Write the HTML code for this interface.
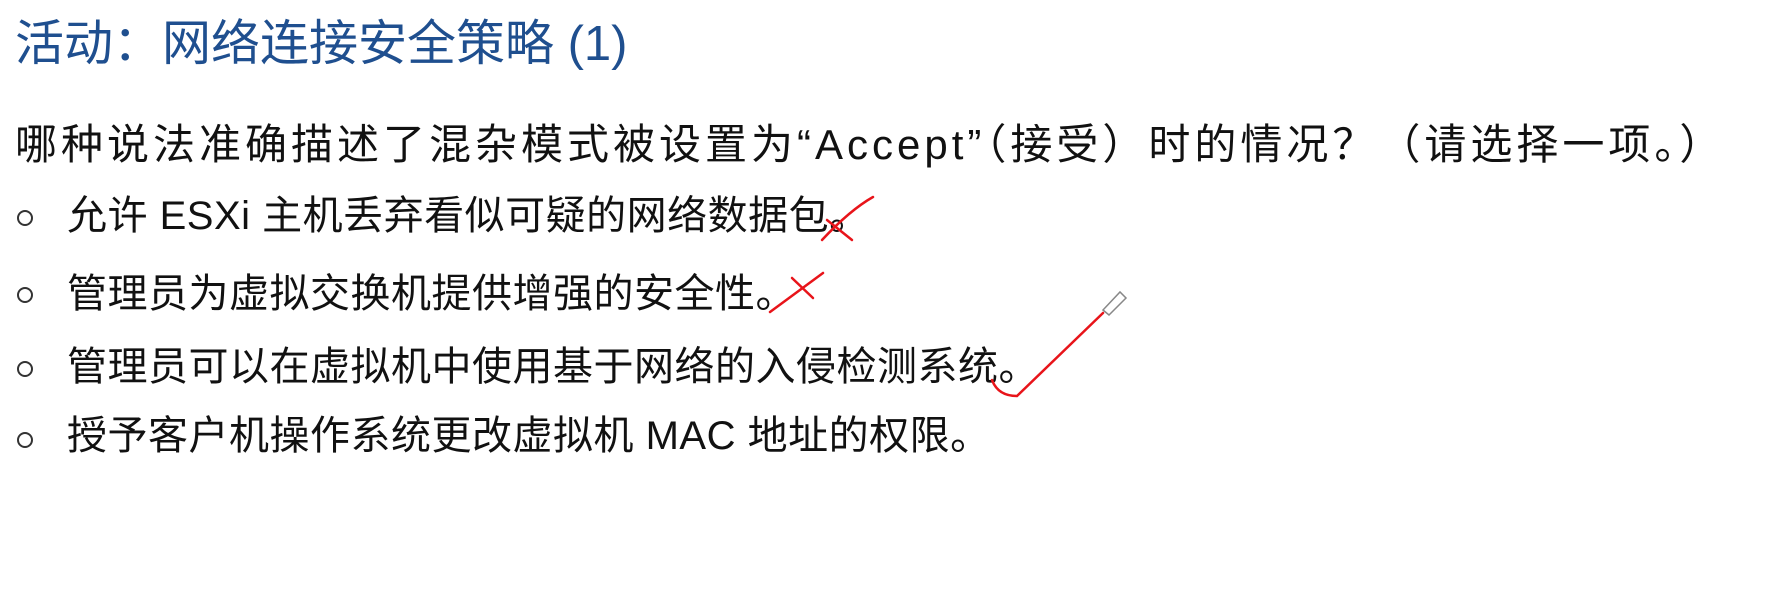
<!DOCTYPE html>
<html><head><meta charset="utf-8"><style>
body{margin:0;width:1770px;height:589px;background:#fff;position:relative;overflow:hidden;font-family:"Liberation Sans","Noto Sans CJK SC",sans-serif;color:#111}
.t{position:absolute;left:15px;top:14px;font-size:49px;line-height:60px;color:#1f4f8f;white-space:nowrap}
.q{position:absolute;left:15px;top:122px;font-size:42px;line-height:46px;white-space:nowrap;letter-spacing:4px}
.b{position:absolute;left:67px;font-size:40px;line-height:44px;white-space:nowrap;letter-spacing:0.5px}
.c{position:absolute;left:17px;width:12px;height:12px;border:2px solid #333;border-radius:50%}
</style></head><body>
<div class="t">活动：网络连接安全策略 (1)</div>
<div class="q">哪种说法准确描述了混杂模式被设置为“Accept”（接受）时的情况？（请选择一项。）</div>
<div class="c" style="top:210px"></div><div class="b" style="top:194px">允许 ESXi 主机丢弃看似可疑的网络数据包。</div>
<div class="c" style="top:287px"></div><div class="b" style="top:272px">管理员为虚拟交换机提供增强的安全性。</div>
<div class="c" style="top:361px"></div><div class="b" style="top:345px">管理员可以在虚拟机中使用基于网络的入侵检测系统。</div>
<div class="c" style="top:432px"></div><div class="b" style="top:414px">授予客户机操作系统更改虚拟机 MAC 地址的权限。</div>
<svg width="1770" height="589" style="position:absolute;left:0;top:0" fill="none" stroke="#e8141a" stroke-width="2.5" stroke-linecap="round">
<path d="M822 240 Q850 210 873 197"/>
<path d="M827 220 L852 240"/>
<path d="M770 312 Q800 290 823 273"/>
<path d="M792 278 L813 298"/>
<path d="M992 380 Q998 396 1017 396 L1103 313"/>
<g stroke="#888" stroke-width="1.5"><path d="M1103 310 L1120 292 L1126 298 L1109 315 Z"/></g>
</svg>
</body></html>
